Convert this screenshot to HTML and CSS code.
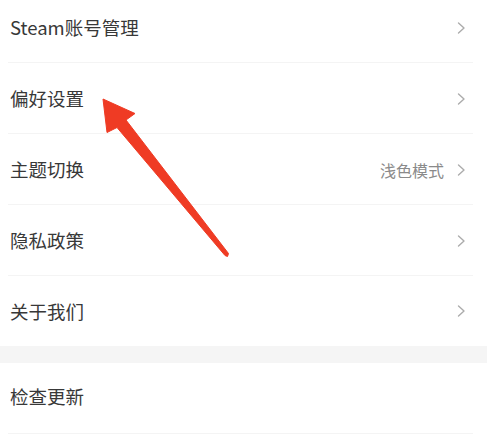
FILE: index.html
```html
<!DOCTYPE html>
<html lang="zh-CN">
<head>
<meta charset="utf-8">
<link rel="stylesheet" href="styles.css">
</head>
<body>
<div class="page">
  <div class="group first">
    <div class="row"><span class="label">Steam账号管理</span><span class="right"><svg class="chev" viewBox="0 0 9 12"><polyline points="1.5,1 7,6 1.5,11"/></svg></span></div>
    <div class="row"><span class="label">偏好设置</span><span class="right"><svg class="chev" viewBox="0 0 9 12"><polyline points="1.5,1 7,6 1.5,11"/></svg></span></div>
    <div class="row"><span class="label">主题切换</span><span class="right"><span class="value">浅色模式</span><svg class="chev" viewBox="0 0 9 12"><polyline points="1.5,1 7,6 1.5,11"/></svg></span></div>
    <div class="row"><span class="label">隐私政策</span><span class="right"><svg class="chev" viewBox="0 0 9 12"><polyline points="1.5,1 7,6 1.5,11"/></svg></span></div>
    <div class="row last"><span class="label">关于我们</span><span class="right"><svg class="chev" viewBox="0 0 9 12"><polyline points="1.5,1 7,6 1.5,11"/></svg></span></div>
  </div>
  <div class="band"></div>
  <div class="group">
    <div class="row up"><span class="label">检查更新</span></div>
  </div>
  <svg class="arrow" viewBox="0 0 487 441" width="487" height="441">
    <polygon points="103,107 135,121.5 126,128 228.5,261.5 227.5,264.5 225,263.5 117,135.5 107,140.5"/>
  </svg>
</div>
</body>
</html>
```
FILE: styles.css
```css
* { box-sizing: border-box; }
html, body { margin: 0; padding: 0; background: #fff; }
body {
  font-family: "Noto Sans CJK SC", "Noto Sans", sans-serif;
  color: #333;
  overflow: hidden;
  width: 487px;
  height: 441px;
}
.page { position: relative; width: 487px; height: 441px; }
.group.first { margin-top: -8px; }
.row {
  height: 71px;
  display: flex;
  align-items: center;
  justify-content: space-between;
  padding: 0 21px 0 10px;
  position: relative;
}
.row.up { padding-bottom: 4px; }
.row::after {
  content: "";
  position: absolute;
  left: 8px;
  right: 14px;
  bottom: 0;
  height: 1px;
  background: #f4f4f4;
}
.row.last::after { display: none; }
.row.last { height: 70px; }
.label { font-size: 18.5px; line-height: 1; color: #383838; }
.right { display: flex; align-items: center; }
.value { font-size: 16px; color: #8a8a8a; margin-right: 13px; line-height: 1; }
.chev { width: 9px; height: 12px; display: block; }
.chev polyline { fill: none; stroke: #acacac; stroke-width: 1.4; stroke-linecap: round; stroke-linejoin: round; }
.band { height: 17px; background: #f5f5f5; }
.arrow { position: absolute; left: 0; top: 0; pointer-events: none; }
.arrow polygon { fill: #ef3b24; stroke: #ef3b24; stroke-width: 1; stroke-linejoin: round; }
```
